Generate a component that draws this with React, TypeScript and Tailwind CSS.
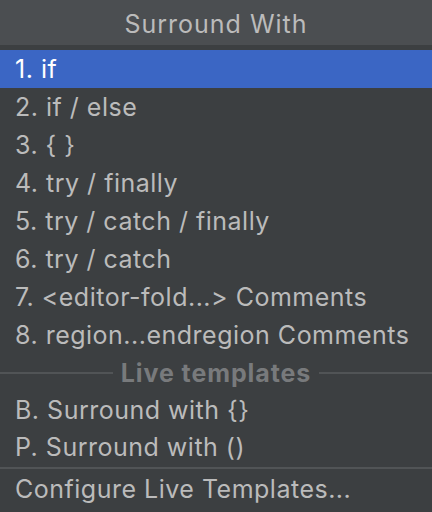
const ITEMS = [
  "1. if",
  "2. if / else",
  "3. { }",
  "4. try / finally",
  "5. try / catch / finally",
  "6. try / catch",
  "7. <editor-fold...> Comments",
  "8. region...endregion Comments",
];

const TEMPLATES = ["B. Surround with {}", "P. Surround with ()"];

export default function App() {
  return (
    <div
      className="w-[432px] h-[512px] overflow-hidden bg-[#3c3f41] text-[25px] leading-none tracking-[0.5px] text-[#bbbbbb]"
      style={{ fontFamily: "Inter, 'Noto Sans', sans-serif" }}
    >
      <div className="h-[45px] pt-[3px] bg-[#4b4e51] flex items-center justify-center tracking-[1px] text-[#bbbbbb]">
        Surround With
      </div>
      <div className="pt-[5px]">
        {ITEMS.map((label, i) => (
          <div
            key={label}
            className={`h-[38px] flex items-center px-[15px] ${
              i === 0 ? "bg-[#3b66c4] text-white" : ""
            }`}
          >
            {label}
          </div>
        ))}
        <div className="h-[38px] flex items-center gap-2">
          <div className="flex-1 h-[2px] bg-[#515456]" />
          <span className="font-bold tracking-[0.9px] text-[#787a7c]">Live templates</span>
          <div className="flex-1 h-[2px] bg-[#515456]" />
        </div>
        {TEMPLATES.map((label) => (
          <div key={label} className="h-[37px] flex items-center px-[15px]">
            {label}
          </div>
        ))}
        <div className="h-[2px] bg-[#515456] my-[1px]" />
        <div className="h-[38px] flex items-center px-[15px]">Configure Live Templates...</div>
      </div>
    </div>
  );
}
